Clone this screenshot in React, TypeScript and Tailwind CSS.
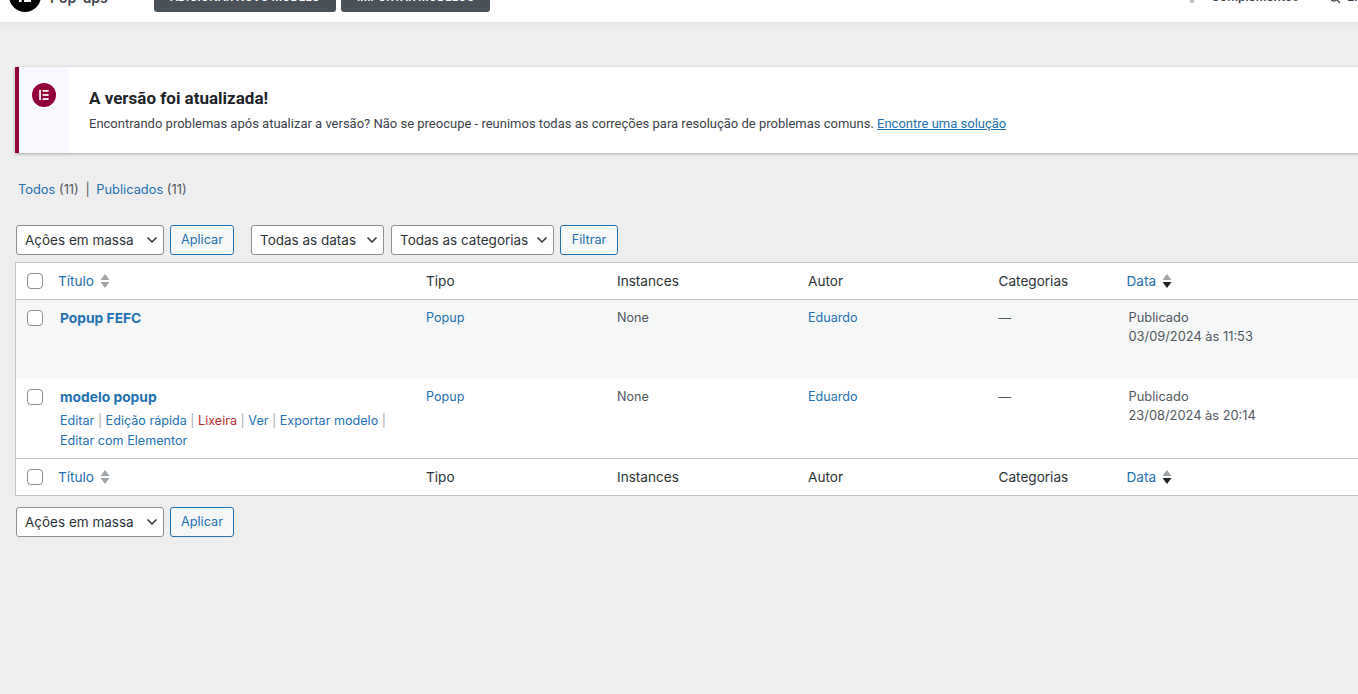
const font = "[font-family:Inter,'Noto_Sans',sans-serif]";

function SortArrows({ active }: { active?: boolean }) {
  return (
    <svg width="10" height="16" viewBox="0 0 10 16" className="ml-[6px] shrink-0">
      <path d="M5 1 L9.5 7 H0.5 Z" fill="#a0a5aa" />
      <path d="M5 15 L9.5 9 H0.5 Z" fill={active ? "#1d2327" : "#a0a5aa"} />
    </svg>
  );
}

function Chevron() {
  return (
    <svg width="12" height="8" viewBox="0 0 12 8" className="shrink-0">
      <path d="M1.5 1.5 L6 6 L10.5 1.5" fill="none" stroke="#2c3338" strokeWidth="1.5" />
    </svg>
  );
}

function Select({ label, width }: { label: string; width: string }) {
  return (
    <div className={`${width} h-[30px] flex items-center justify-between pl-2 pr-[5px] bg-white border border-[#8c8f94] rounded-[3px] text-[13.5px] text-[#2c3338]`}>
      <span>{label}</span>
      <Chevron />
    </div>
  );
}

function OutlineButton({ label, width }: { label: string; width: string }) {
  return (
    <div className={`${width} h-[30px] flex items-center justify-center bg-[#f6f7f7] border border-[#2271b1] rounded-[3px] text-[12.7px] text-[#2271b1]`}>
      {label}
    </div>
  );
}

function Checkbox() {
  return <div className="w-4 h-4 bg-white border border-[#8c8f94] rounded-[4px]" />;
}

const cols = "grid grid-cols-[42px_368px_191px_191px_190.5px_128px_1fr]";

function HeadRow({ top }: { top?: boolean }) {
  return (
    <div className={`${cols} items-center text-[13.6px] text-[#2c3338] bg-white ${top ? "border-b border-[#c3c4c7] h-[37px]" : "h-[36px]"}`}>
      <div className="pl-[11px]">
        <Checkbox />
      </div>
      <div className="flex items-center text-[#2271b1]">
        Título
        <SortArrows />
      </div>
      <div>Tipo</div>
      <div>Instances</div>
      <div>Autor</div>
      <div>Categorias</div>
      <div className="flex items-center text-[#2271b1]">
        Data
        <SortArrows active />
      </div>
    </div>
  );
}

function Row({ title, date, odd, actions }: { title: string; date: string; odd?: boolean; actions?: boolean }) {
  return (
    <div className={`${cols} h-[79px] pt-[8px] text-[12.6px] leading-[19px] text-[#50575e] ${odd ? "bg-[#f6f7f7]" : "bg-white"}`}>
      <div className="pl-[11px] pt-[2px]">
        <Checkbox />
      </div>
      <div className="pl-[2px]">
        <div className="text-[13.8px] font-bold text-[#2271b1] leading-[20px]">{title}</div>
        {actions && (
          <div className="mt-[4px] text-[#2271b1] leading-[20px]">
            <div>
              Editar <span className="text-[#a7aaad]">|</span> Edição rápida <span className="text-[#a7aaad]">|</span>{" "}
              <span className="text-[#b32d2e]">Lixeira</span> <span className="text-[#a7aaad]">|</span> Ver{" "}
              <span className="text-[#a7aaad]">|</span> Exportar modelo <span className="text-[#a7aaad]">|</span>
            </div>
            <div>Editar com Elementor</div>
          </div>
        )}
      </div>
      <div className="text-[#2271b1]">Popup</div>
      <div>None</div>
      <div className="text-[#2271b1]">Eduardo</div>
      <div>—</div>
      <div className="pl-[2px] text-[12.85px]">
        <div>Publicado</div>
        <div>{date}</div>
      </div>
    </div>
  );
}

export default function App() {
  return (
    <div className={`h-screen w-full overflow-hidden bg-[#eeeeee] ${font}`}>
      {/* top bar, scrolled so only its lower part shows */}
      <header className="h-[22px] bg-white shadow-[0_2px_6px_rgba(0,0,0,0.05)] flex items-end overflow-hidden relative">
        <div className="flex items-start h-[12px] self-end mb-[10px] w-full pl-[9px]">
          <div className="w-8 h-8 -mt-[20px] rounded-full bg-black shrink-0 flex items-center justify-center">
            <svg width="16" height="16" viewBox="0 0 16 16">
              <rect x="2" y="2" width="2.6" height="12" fill="#fff" />
              <rect x="7" y="2" width="7" height="2.6" fill="#fff" />
              <rect x="7" y="6.7" width="7" height="2.6" fill="#fff" />
              <rect x="7" y="11.4" width="7" height="2.6" fill="#fff" />
            </svg>
          </div>
          <div className="ml-[9px] -mt-[11px] text-[14px] leading-[17px] font-semibold text-[#3f444b] w-[104px]">Pop-ups</div>
          <div className="w-[182px] h-[30px] -mt-[18px] rounded-[3px] bg-[#4b5159] flex items-center justify-center text-[11.2px] font-semibold text-white uppercase">
            Adicionar novo modelo
          </div>
          <div className="ml-[5px] w-[149px] h-[30px] -mt-[18px] rounded-[3px] bg-[#4b5159] flex items-center justify-center text-[11.2px] font-semibold text-white uppercase">
            Importar modelos
          </div>
          <div className="ml-auto -mt-[12px] flex items-center text-[12px] leading-[17px] font-semibold text-[#3f444b]">
            <svg width="10" height="10" viewBox="0 0 10 10" className="mr-[11px] mt-[3px]">
              <path d="M3 7 L8 2" stroke="#8a8f96" strokeWidth="1" fill="none" />
              <circle cx="2" cy="8" r="1.4" fill="none" stroke="#8a8f96" />
            </svg>
            <span className="w-[118px]">Complementos</span>
            <svg width="12" height="12" viewBox="0 0 12 12" className="mr-[6px] mt-[5px]">
              <circle cx="5" cy="4" r="4" fill="none" stroke="#3f444b" strokeWidth="1.3" />
              <path d="M8 7 L11 10" stroke="#3f444b" strokeWidth="1.3" />
            </svg>
            <span className="w-[11px] overflow-hidden">Encontrar</span>
          </div>
        </div>
      </header>

      <main className="pl-[15px]">
        {/* notice */}
        <div className="mt-[45px] h-[86px] w-[1500px] flex bg-white border-l-4 border-[#92003b] shadow-[0_1px_3px_rgba(0,0,0,0.3)]">
          <div className="w-[50px] bg-[#f7f9fe] flex justify-center pt-[16px]">
            <div className="w-6 h-6 rounded-full bg-[#92003b] flex items-center justify-center">
              <svg width="12" height="12" viewBox="0 0 12 12">
                <rect x="1.2" y="1" width="1.7" height="10" fill="#fff" />
                <rect x="4.6" y="1" width="6" height="1.7" fill="#fff" />
                <rect x="4.6" y="5.1" width="6" height="1.7" fill="#fff" />
                <rect x="4.6" y="9.2" width="6" height="1.7" fill="#fff" />
              </svg>
            </div>
          </div>
          <div className="pl-[20px] pt-[20px]">
            <div className="[font-family:Roboto,sans-serif] text-[17px] leading-[22px] font-bold text-[#1d2327]">
              A versão foi atualizada!
            </div>
            <div className="mt-[5px] [font-family:Roboto,sans-serif] text-[13px] leading-[20px] text-[#3c434a]">
              Encontrando problemas após atualizar a versão? Não se preocupe - reunimos todas as correções para resolução de problemas comuns.{" "}
              <span className="text-[#2271b1] underline">Encontre uma solução</span>
            </div>
          </div>
        </div>

        {/* views */}
        <div className="mt-[27px] pl-[3px] h-[19px] text-[12.85px] leading-[19px] text-[#50575e]">
          <span className="text-[#2271b1]">Todos</span> (11) <span className="mx-[3px]">|</span>{" "}
          <span className="text-[#2271b1]">Publicados</span> (11)
        </div>

        {/* filters */}
        <div className="mt-[26px] pl-px flex items-center">
          <Select label="Ações em massa" width="w-[148px]" />
          <div className="ml-[6px]">
            <OutlineButton label="Aplicar" width="w-[64px]" />
          </div>
          <div className="ml-[17px]">
            <Select label="Todas as datas" width="w-[133px]" />
          </div>
          <div className="ml-[7px]">
            <Select label="Todas as categorias" width="w-[163px]" />
          </div>
          <div className="ml-[6px]">
            <OutlineButton label="Filtrar" width="w-[58px]" />
          </div>
        </div>

        {/* table */}
        <div className="mt-[7px] w-[1500px] border border-[#c3c4c7]">
          <HeadRow top />
          <Row title="Popup FEFC" date="03/09/2024 às 11:53" odd />
          <Row title="modelo popup" date="23/08/2024 às 20:14" actions />
          <div className="border-t border-[#c3c4c7]">
            <HeadRow />
          </div>
        </div>

        <div className="mt-[11px] pl-px flex items-center">
          <Select label="Ações em massa" width="w-[148px]" />
          <div className="ml-[6px]">
            <OutlineButton label="Aplicar" width="w-[64px]" />
          </div>
        </div>
      </main>
    </div>
  );
}
